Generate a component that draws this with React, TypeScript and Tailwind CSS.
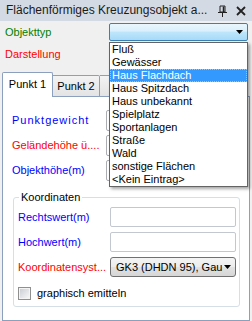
const listItems = [
  'Fluß',
  'Gewässer',
  'Haus Flachdach',
  'Haus Spitzdach',
  'Haus unbekannt',
  'Spielplatz',
  'Sportanlagen',
  'Straße',
  'Wald',
  'sonstige Flächen',
  '<Kein Eintrag>',
]

function Arrow() {
  return (
    <svg width="7" height="4" viewBox="0 0 7 4">
      <path d="M0 0h7L3.5 4z" fill="#000" />
    </svg>
  )
}

function TextInput() {
  return <div className="h-[20px] w-[126px] rounded-[2px] border border-[#c3c7cf] bg-white" />
}

export default function App() {
  return (
    <div className="relative h-[321px] w-[252px] overflow-hidden bg-[#f0f0f0] font-['Liberation_Sans',Arial,sans-serif] text-[11px] leading-[13px] text-black">
      {/* Titelleiste */}
      <div className="flex h-[21px] items-center bg-[#d4dae4] pl-[6px] pr-[6px]">
        <span className="flex-1 text-[12px] text-[#1b1b1b]">Flächenförmiges Kreuzungsobjekt a...</span>
        <svg width="10" height="12" viewBox="0 0 10 12" className="mr-[8px]">
          <path d="M2 1h5v6H2z" fill="none" stroke="#222" strokeWidth="1" />
          <path d="M5.5 1.5v5.5" stroke="#222" strokeWidth="1.5" />
          <path d="M0 7.5h9" stroke="#222" strokeWidth="1" />
          <path d="M4.5 8v4" stroke="#222" strokeWidth="1" />
        </svg>
        <svg width="10" height="10" viewBox="0 0 10 10">
          <path d="M1 1l8 8M9 1l-8 8" stroke="#222" strokeWidth="1.8" />
        </svg>
      </div>

      {/* Kopfbereich */}
      <div className="h-[49px]">
        <div className="mt-[2px] flex h-[18px] items-center pl-[5px]">
          <span className="w-[104px] text-[#008000]">Objekttyp</span>
          <div className="flex h-[18px] w-[139px] items-center justify-end rounded-[2px] border border-[#3c7fb1] bg-[linear-gradient(#eaf6fd_0%,#d9f0fc_45%,#bee6fd_50%,#a7d9f5_100%)] pr-[4px]">
            <Arrow />
          </div>
        </div>
        <div className="mt-[3px] flex h-[20px] items-center pl-[5px]">
          <span className="w-[104px] text-[#ff0000]">Darstellung</span>
          <div className="h-[20px] w-[139px] rounded-[2px] border border-[#707070] bg-[#e6e6e6]" />
        </div>
      </div>

      {/* Reiter */}
      <div className="ml-[2px] flex h-[25px] w-[248px] items-end">
        <div className="flex h-[25px] w-[51px] justify-center rounded-t-[2px] border-x border-t border-[#8c9fbd] bg-white pt-[4px] leading-[14px]">
          Punkt 1
        </div>
        <div className="flex h-[22px] w-[47px] items-center justify-center rounded-tr-[2px] border-y border-r border-[#8c9fbd] bg-[linear-gradient(#f3f3f3,#e3e3e3)]">
          Punkt 2
        </div>
        <div className="h-[22px] w-[47px] rounded-tr-[2px] border-y border-r border-[#8c9fbd] bg-[linear-gradient(#f3f3f3,#e3e3e3)]" />
        <div className="h-[1px] flex-1 bg-[#8c9fbd]" />
      </div>

      {/* Reiterseite */}
      <div className="ml-[2px] h-[224px] w-[248px] border-x border-b border-[#8c9fbd] bg-white pt-[13px]">
        <div className="flex flex-col gap-[4px] pl-[9px]">
          <div className="flex h-[21px] items-center">
            <span className="w-[94px] tracking-[1px] text-[#0000ff]">Punktgewicht</span>
            <div className="h-[21px] w-[134px] rounded-[2px] border border-[#abadb3] bg-white" />
          </div>
          <div className="flex h-[21px] items-center">
            <span className="w-[94px] text-[#ff0000]">Geländehöhe ü....</span>
            <div className="h-[21px] w-[134px] rounded-[2px] border border-[#abadb3] bg-white" />
          </div>
          <div className="flex h-[21px] items-center">
            <span className="w-[94px] text-[#0000ff]">Objekthöhe(m)</span>
            <div className="h-[21px] w-[134px] rounded-[2px] border border-[#abadb3] bg-white" />
          </div>
        </div>

        <fieldset className="ml-[10px] mt-[10px] w-[227px] rounded-[3px] border border-[#d5dfe5] pb-[5px] pl-[4px]">
          <legend className="ml-[1px] px-[2px] leading-[13px]">Koordinaten</legend>
          <div className="mt-[3px] flex h-[20px] items-center">
            <span className="w-[92px] text-[#0000ff]">Rechtswert(m)</span>
            <TextInput />
          </div>
          <div className="mt-[5px] flex h-[20px] items-center">
            <span className="w-[92px] text-[#0000ff]">Hochwert(m)</span>
            <TextInput />
          </div>
          <div className="mt-[5px] flex h-[20px] items-center">
            <span className="w-[92px] text-[#ff0000]">Koordinatensyst...</span>
            <div className="flex h-[20px] w-[126px] items-center rounded-[3px] border border-[#707070] bg-[linear-gradient(#f4f4f4_0%,#ececec_50%,#e2e2e2_50%,#d6d6d6_100%)] pl-[5px] pr-[4px]">
              <span className="flex-1">GK3 (DHDN 95), Gau</span>
              <Arrow />
            </div>
          </div>
          <div className="mt-[8px] flex h-[16px] items-center">
            <div className="flex h-[13px] w-[13px] items-center justify-center border border-[#8f8f8f] bg-[#f4f4f4]">
              <div className="h-[9px] w-[9px] bg-[linear-gradient(135deg,#cbcfd5,#f6f6f6)]" />
            </div>
            <span className="ml-[6px]">graphisch emitteln</span>
          </div>
        </fieldset>
      </div>

      {/* Aufgeklappte Liste */}
      <div className="absolute left-[109px] top-[42px] w-[139px] border border-[#646464] bg-white shadow-[2px_2px_3px_rgba(0,0,0,0.35)]">
        {listItems.map((item) =>
          item === 'Haus Flachdach' ? (
            <div
              key={item}
              className="h-[13px] border border-dotted border-[#f0b070] bg-[#3399ff] pl-[1px] leading-[11px] text-white"
            >
              {item}
            </div>
          ) : (
            <div key={item} className="h-[13px] pl-[2px]">
              {item}
            </div>
          ),
        )}
      </div>
    </div>
  )
}
